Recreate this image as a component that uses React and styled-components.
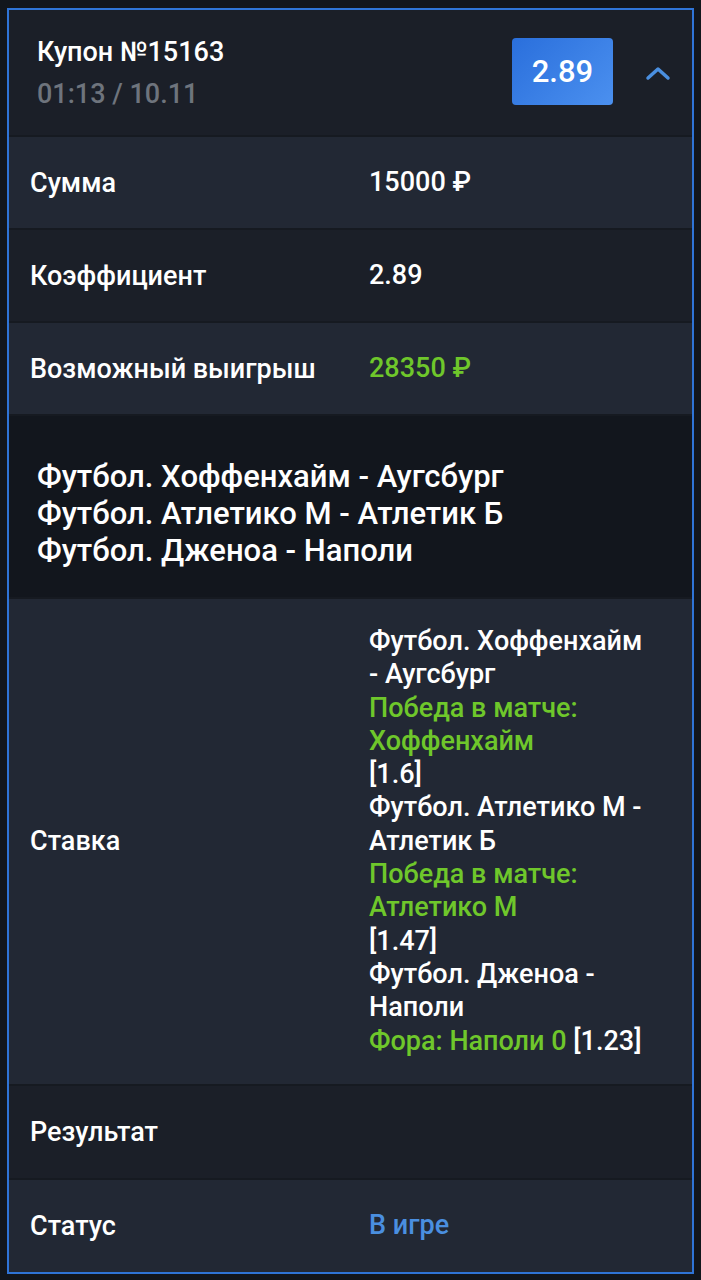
import styled, { createGlobalStyle } from 'styled-components';

const GlobalStyle = createGlobalStyle`
  html, body {
    margin: 0;
    padding: 0;
    background: #12161c;
  }
  body {
    font-family: Roboto, "Noto Sans", "Liberation Sans", sans-serif;
    color: #ffffff;
  }
`;

const Page = styled.div`
  padding: 8px 7px 5px 7px;
`;

const Card = styled.div`
  border: 2px solid #2f74d6;
  background: #1b1f28;
  display: flex;
  flex-direction: column;
`;

const Header = styled.div`
  display: flex;
  align-items: center;
  height: 125px;
  padding: 0 21px 0 28px;
  background: #1b1f28;
`;

const Title = styled.div`
  flex: 1;
  display: flex;
  flex-direction: column;
  gap: 8px;
`;

const CouponName = styled.div`
  font-size: 27px;
  font-weight: 500;
  line-height: 34px;
`;

const CouponDate = styled.div`
  font-size: 27px;
  font-weight: 500;
  line-height: 34px;
  color: #6e747d;
`;

const Badge = styled.div`
  width: 101px;
  height: 67px;
  margin-right: 32px;
  margin-top: -2px;
  border-radius: 4px;
  background: linear-gradient(135deg, #2a6fdc 0%, #4b90ef 100%);
  display: flex;
  align-items: center;
  justify-content: center;
  font-size: 31px;
  font-weight: 500;
`;

const Toggle = styled.div`
  width: 26px;
  display: flex;
  justify-content: center;
  align-items: center;
`;

const Row = styled.div`
  display: grid;
  grid-template-columns: 339px 1fr;
  align-items: center;
  min-height: ${p => (p.$short ? '93px' : '94px')};
  padding: 0 40px 0 21px;
  border-top: 2px solid #161a21;
  background: ${p => (p.$light ? '#222834' : '#1b1f28')};
  box-sizing: border-box;
`;

const Label = styled.div`
  font-size: 27px;
  font-weight: 500;
`;

const Value = styled.div`
  font-size: 27px;
  font-weight: 500;
  line-height: 33.3px;
  color: ${p => p.$color || '#ffffff'};
  padding: ${p => (p.$tall ? '26px 0' : '0')};
`;

const Green = styled.span`
  color: #6fc72b;
`;

const Matches = styled.div`
  background: #12161d;
  border-top: 2px solid #161a21;
  padding: 42px 28px 28px 28px;
  display: flex;
  flex-direction: column;
  font-size: 31px;
  font-weight: 500;
  line-height: 37px;
`;

const Chevron = () => (
  <svg width="26" height="16" viewBox="0 0 26 16">
    <path d="M3 13 L13 4 L23 13" fill="none" stroke="#4a8fe0" strokeWidth="3.5" strokeLinecap="round" strokeLinejoin="round" />
  </svg>
);

export default function App() {
  return (
    <Page>
      <GlobalStyle />
      <Card>
        <Header>
          <Title>
            <CouponName>Купон №15163</CouponName>
            <CouponDate>01:13 / 10.11</CouponDate>
          </Title>
          <Badge>2.89</Badge>
          <Toggle>
            <Chevron />
          </Toggle>
        </Header>
        <Row $light $short>
          <Label>Сумма</Label>
          <Value>15000 ₽</Value>
        </Row>
        <Row $short>
          <Label>Коэффициент</Label>
          <Value>2.89</Value>
        </Row>
        <Row $light $short>
          <Label>Возможный выигрыш</Label>
          <Value $color="#6fc72b">28350 ₽</Value>
        </Row>
        <Matches>
          <div>Футбол. Хоффенхайм - Аугсбург</div>
          <div>Футбол. Атлетико М - Атлетик Б</div>
          <div>Футбол. Дженоа - Наполи</div>
        </Matches>
        <Row $light>
          <Label>Ставка</Label>
          <Value $tall>
            Футбол. Хоффенхайм - Аугсбург
            <br />
            <Green>Победа в матче: Хоффенхайм</Green>
            <br />
            [1.6]
            <br />
            Футбол. Атлетико М - Атлетик Б
            <br />
            <Green>Победа в матче: Атлетико М</Green>
            <br />
            [1.47]
            <br />
            Футбол. Дженоа - Наполи
            <br />
            <Green>Фора: Наполи 0</Green> [1.23]
          </Value>
        </Row>
        <Row>
          <Label>Результат</Label>
          <Value />
        </Row>
        <Row $light>
          <Label>Статус</Label>
          <Value $color="#4a8fe0">В игре</Value>
        </Row>
      </Card>
    </Page>
  );
}
